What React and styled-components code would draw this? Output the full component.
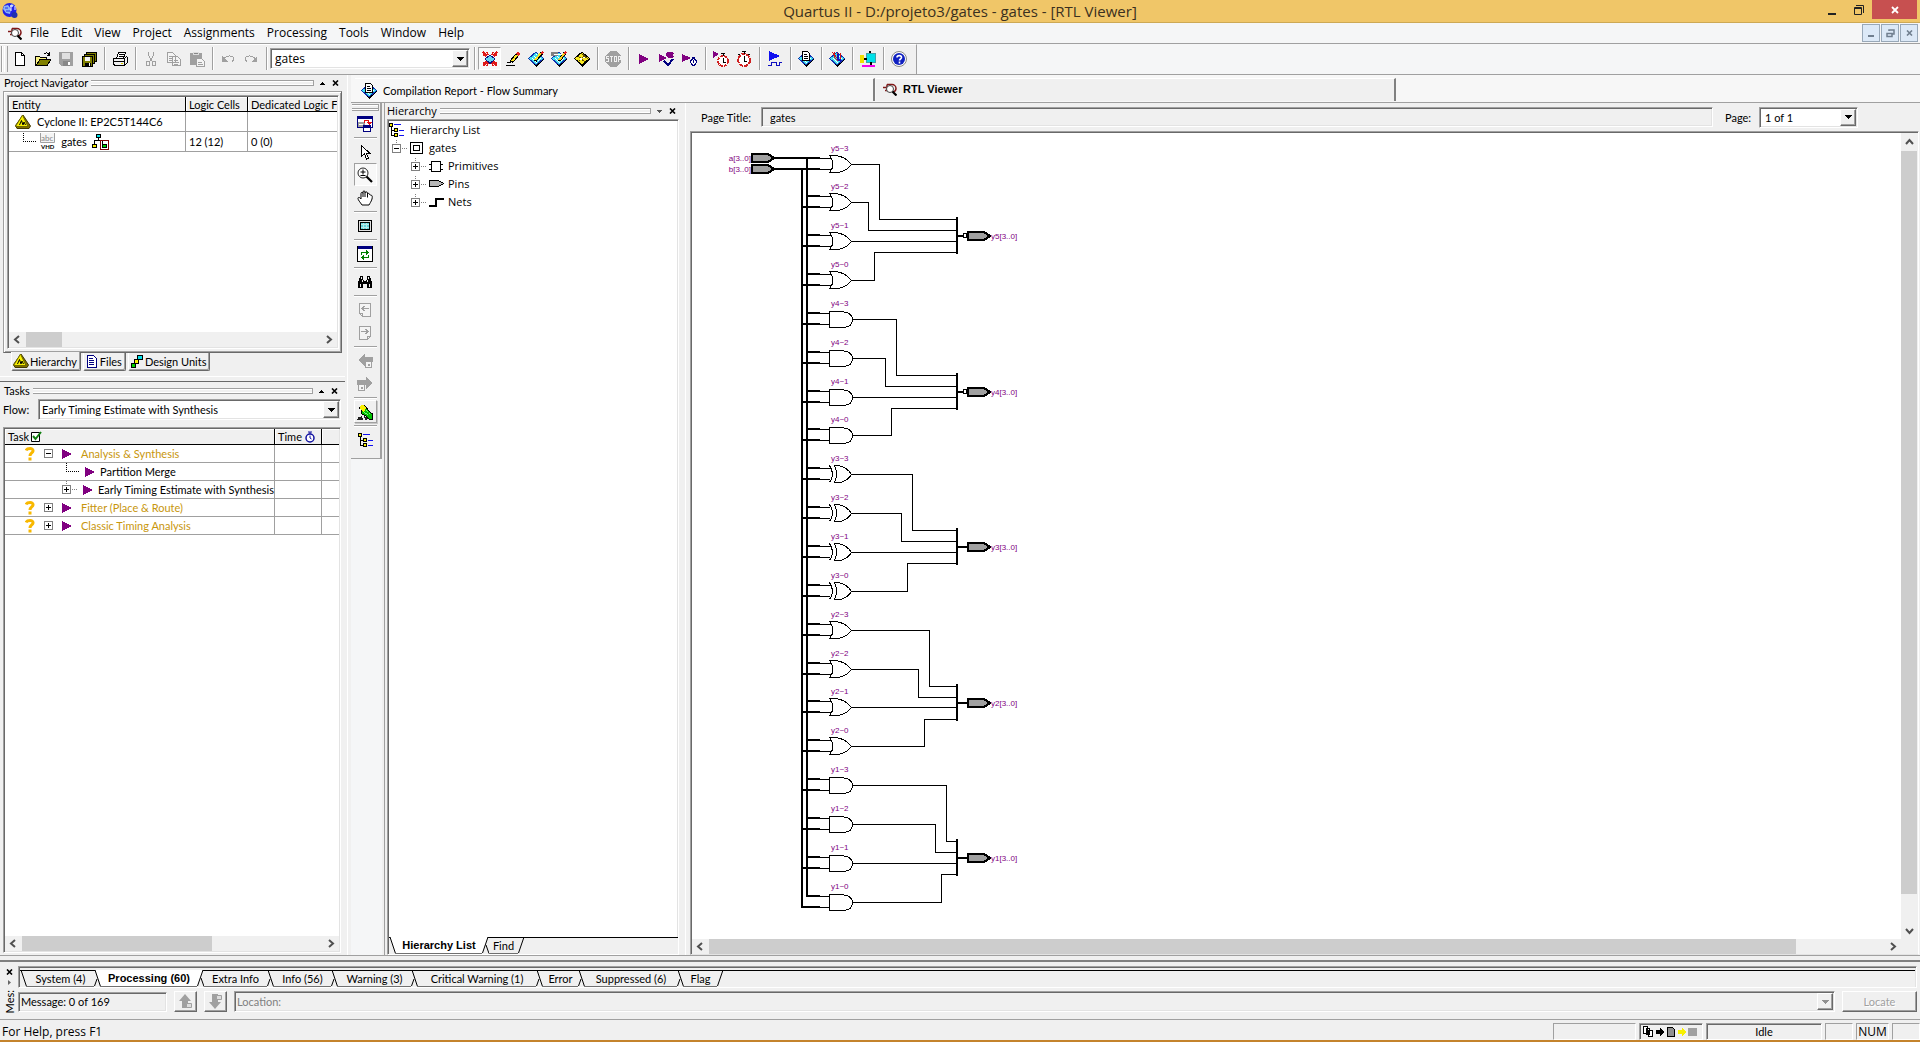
import React from "react";
import styled, { createGlobalStyle, css } from "styled-components";

const ui = '"Open Sans", "Noto Sans", sans-serif';
const classic = 'Lato, "Liberation Sans", Arial, sans-serif';
const classicBold = '"Liberation Sans", Arial, sans-serif';

const GlobalStyle = createGlobalStyle`
  *, *::before, *::after { box-sizing: border-box; }
  body { margin: 0; background: #f0f0f0; color: #000; font: 11px/13px ${classic}; overflow: hidden; }
  button, input, select { font: inherit; color: inherit; margin: 0; padding: 0; border: 0; border-radius: 0; background: none; }
  svg { display: block; flex: none; }
`;

const sunken = css`
  border: 1px solid;
  border-color: #a0a0a0 #fff #fff #a0a0a0;
  box-shadow: inset 1px 1px #696969, inset -1px -1px #e3e3e3;
`;
const raised = css`
  border: 1px solid;
  border-color: #fff #696969 #696969 #fff;
  box-shadow: inset -1px -1px #a0a0a0;
`;

const Shell = styled.div`display: flex; flex-direction: column; height: 100vh;`;

/* ---------- title bar and menu ---------- */
const TitleBar = styled.header`
  display: grid; grid-template-columns: 1fr auto 1fr; height: 23px; flex: none;
  background: #f0c668; border-bottom: 1px solid #cda955;
`;
const AppMark = styled.div`padding: 2px 0 0 2px;`;
const AppTitle = styled.h1`margin: 0; font: 400 15px/23px ${ui}; color: #3a3020;`;
const WindowButtons = styled.div`display: flex; justify-content: flex-end; padding-right: 3px;`;
const WindowButton = styled.button`
  display: flex; align-items: center; justify-content: center;
  width: ${(p) => (p.$close ? 45 : 27)}px; height: 19px;
  background: ${(p) => (p.$close ? "#c75050" : "transparent")};
`;
const MenuBar = styled.nav`
  display: flex; align-items: center; height: 20px; flex: none; padding: 0 2px 0 8px; background: #f5f6f7;
  & > svg { margin-right: 2px; }
`;
const MenuItem = styled.button`padding: 0 6px; font: 12px/18px ${ui};`;
const MdiButtons = styled.div`display: flex; gap: 1px; margin-left: auto;`;
const MdiButton = styled.button`
  display: flex; align-items: center; justify-content: center; width: 18px; height: 18px;
  border: 1px solid #98a8b8; background: #dce9f7;
`;

/* ---------- main toolbar ---------- */
const ToolbarRow = styled.div`
  display: flex; height: 32px; flex: none; background: #f5f6f7;
  border-top: 1px solid #a0a0a0; border-bottom: 1px solid #a0a0a0;
`;
const Toolbar = styled.div`
  display: flex; align-items: center; padding: 0 6px 2px 1px; background: #f0f0f0;
  border-top: 1px solid #fff; border-right: 1px solid #a0a0a0;
`;
const GripV = styled.div`
  width: 7px; height: 26px;
  border: solid #a0a0a0; border-width: 0 1px; box-shadow: inset 1px 0 #fff, inset -2px 0 #f0f0f0, inset -3px 0 #fff;
`;
const ToolButton = styled.button`
  display: flex; align-items: center; justify-content: center; width: 23px; height: 23px;
  ${(p) => p.$on && css`background: #f8f8f8; border: 1px solid; border-color: #a0a0a0 #fff #fff #a0a0a0;`}
  ${(p) => p.$up && css`border: 1px solid; border-color: #fff #a0a0a0 #a0a0a0 #fff; box-shadow: 1px 1px #c8c8c8;`}
`;
const Divider = styled.div`
  width: 8px; height: 23px;
  background: linear-gradient(to right, transparent 4px, #a0a0a0 4px, #a0a0a0 5px, #fff 5px, #fff 6px, transparent 6px);
`;

/* ---------- combo box ---------- */
const ComboBox = styled.div`
  ${sunken} position: relative; width: ${(p) => p.$width || "auto"}; flex: ${(p) => (p.$grow ? 1 : "none")};
  height: 21px; background: ${(p) => (p.$disabled ? "#f0f0f0" : "#fff")};
`;
const ComboSelect = styled.select`
  appearance: none; display: block; width: 100%; height: 100%;
  padding: 0 20px 0 ${(p) => p.$pad || 4}px; outline: 0; font: ${(p) => (p.$large ? `12px/17px ${ui}` : `11px/17px ${classic}`)};
  &:disabled { color: #808080; opacity: 1; }
`;
const ComboArrow = styled.span`
  ${raised} position: absolute; right: 1px; top: 1px; bottom: 1px; width: 16px; background: #f0f0f0;
  display: flex; align-items: center; justify-content: center; pointer-events: none;
`;
function Combo({ label, value, width, grow, disabled, large, pad }) {
  return (
    <ComboBox $width={width} $grow={grow} $disabled={disabled}>
      <ComboSelect aria-label={label} disabled={disabled} $large={large} $pad={pad} defaultValue={value}>
        <option>{value}</option>
      </ComboSelect>
      <ComboArrow>
        <svg width="7" height="4" shapeRendering="crispEdges"><path d="M0 0h7L3.500 4z" fill={disabled ? "#909090" : "#000"} /></svg>
      </ComboArrow>
    </ComboBox>
  );
}

/* ---------- docks ---------- */
const Workspace = styled.main`display: flex; flex: 1; min-height: 0; border-bottom: 1px solid #a0a0a0;`;
const LeftDock = styled.aside`display: flex; flex-direction: column; width: 345px; flex: none;`;
const DockSection = styled.section`
  display: flex; flex-direction: column; padding: ${(p) => (p.$tasks ? "1px 4px 2px 3px" : "0 3px 9px 3px")};
  ${(p) => (p.$tasks ? css`flex: 1; min-height: 0;` : css`height: 307px; border-bottom: 1px solid #696969; box-shadow: inset 0 -4px #f0f0f0, inset 0 -5px #fff;`)}
`;
const CaptionBar = styled.div`display: flex; align-items: center; height: 16px; flex: none; padding: 0 0 0 1px;`;
const Caption = styled.h2`margin: 0; font: 400 11px/14px ${(p) => (p.$ui ? ui : classic)};`;
const Grip = styled.div`
  flex: 1; height: 6px; margin: 0 2px 0 3px; border: solid #a0a0a0; border-width: 1px 1px 1px 0;
  background: linear-gradient(#fff 1px, transparent 1px, transparent 3px, #fff 3px);
`;
const CaptionButton = styled.button`display: flex; align-items: center; justify-content: center; width: 13px; height: 12px;`;
function SmallX({ color = "#000" }) {
  return <svg width="7" height="6"><path d="M1 .500l5 5M6 .500l-5 5" stroke={color} strokeWidth="1.600" /></svg>;
}
function DockCaption({ text, down, uiFont }) {
  return (
    <CaptionBar>
      <Caption $ui={uiFont}>{text}</Caption>
      <Grip />
      <CaptionButton aria-label="Dock">
        <svg width="5" height="3" shapeRendering="crispEdges"><path d={down ? "M0 0h5L2.500 3z" : "M0 3h5L2.500 0z"} fill={down ? "#555" : "#000"} /></svg>
      </CaptionButton>
      <CaptionButton aria-label="Close"><SmallX /></CaptionButton>
    </CaptionBar>
  );
}

const OuterFrame = styled.div`
  display: flex; flex: 1; min-height: 0; padding: 3px 2px 3px 3px;
  border: 1px solid; border-color: #a0a0a0 #696969 #696969 #a0a0a0; box-shadow: inset 1px 1px #fff, inset -1px -1px #a0a0a0;
`;
const Well = styled.div`
  ${sunken} display: flex; flex-direction: column; flex: 1; min-width: 0; min-height: 0; padding: 1px; background: #fff;
`;
const WellBody = styled.div`flex: 1; min-height: 0; overflow: hidden;`;

const Grid = styled.table`
  width: 100%; table-layout: fixed; border-collapse: separate; border-spacing: 0;
  th, td { padding: 0 0 0 3px; text-align: left; font-weight: 400; white-space: nowrap; height: ${(p) => p.$row}px; }
  th { height: ${(p) => p.$head}px; background: #f0f0f0; border-right: 1px solid #000; border-bottom: 1px solid #000; box-shadow: inset 1px 1px #fff; }
  td { border-right: 1px solid #a0a0a0; border-bottom: 1px solid #a0a0a0; }
  th:last-child, td:last-child { border-right: 0; }
`;
const Cell = styled.div`display: flex; align-items: center; gap: ${(p) => p.$gap || 6}px; padding-left: ${(p) => p.$pad || 0}px; color: ${(p) => (p.$amber ? "#c8960c" : "#000")};`;
const Slot = styled.span`display: flex; align-items: center; justify-content: center; width: ${(p) => p.$w}px; flex: none;`;

/* ---------- scroll bars ---------- */
const HScroll = styled.div`display: flex; height: 15px; flex: none; background: #f0f0f0;`;
const VScroll = styled.div`display: flex; flex-direction: column; width: 16px; background: #f0f0f0;`;
const ScrollTrack = styled.div`display: flex; flex: 1; flex-direction: ${(p) => (p.$v ? "column" : "row")};`;
const ScrollThumb = styled.div`flex: 0 0 ${(p) => p.$size}; background: #cdcdcd;`;
const ScrollButton = styled.button`display: flex; align-items: center; justify-content: center; width: 17px; height: ${(p) => (p.$v ? 18 : 15)}px; flex: none;`;
const chevrons = { left: "M6 1L2 4.500 6 8", right: "M3 1l4 3.500L3 8", up: "M1 6l3.500-4L8 6", down: "M1 3l3.500 4L8 3" };
function Chevron({ dir, v }) {
  return <ScrollButton $v={v} aria-label={dir}><svg width="9" height="9"><path d={chevrons[dir]} fill="none" stroke="#505050" strokeWidth="2" /></svg></ScrollButton>;
}
function HBar({ size }) {
  return <HScroll><Chevron dir="left" /><ScrollTrack><ScrollThumb $size={size} /></ScrollTrack><Chevron dir="right" /></HScroll>;
}

/* ---------- navigator tabs ---------- */
const NavTabs = styled.div`display: flex; gap: 2px; height: 19px; flex: none; padding-left: 8px;`;
const NavTab = styled.button`
  display: flex; align-items: center; gap: ${(p) => (p.$on ? 1 : 2)}px; height: ${(p) => (p.$on ? 19 : 18)}px; padding: 0 3px 0 ${(p) => (p.$on ? 1 : 2)}px;
  margin-top: ${(p) => (p.$on ? -1 : 0)}px; background: #f0f0f0;
  border: solid; border-width: 0 1px 1px; border-color: #696969 #696969 #696969 #fff; border-radius: 0 0 2px 2px; box-shadow: inset -1px -1px #a0a0a0;
`;
const FlowRow = styled.div`display: flex; align-items: center; height: 21px; margin-bottom: 7px; flex: none;`;
const FlowLabel = styled.span`width: 35px;`;

/* ---------- document area ---------- */
const Documents = styled.div`display: flex; flex-direction: column; flex: 1; min-width: 0; margin-left: 2px; border-left: 1px solid #fff; padding-left: 3px;`;
const DocTabs = styled.div`display: flex; height: 28px; flex: none; background: #f7f7f7; border-bottom: 1px solid #a0a0a0; padding-top: 3px;`;
const DocTab = styled.button`
  display: flex; align-items: center; width: ${(p) => p.$w}; height: 23px; text-align: left;
  margin-left: ${(p) => (p.$on ? 1 : 4)}px; padding: ${(p) => (p.$on ? "0 0 2px 7px" : "1px 0 0 6px")}; gap: 6px;
  font: ${(p) => (p.$on ? `700 11px/13px ${classicBold}` : `11px/13px ${classic}`)}; background: ${(p) => (p.$on ? "#f0f0f0" : "#f7f7f7")};
  border: solid; border-width: 1px 2px 0 0; border-color: #fff #808080 #fff #fff;
`;
const DocBody = styled.div`display: flex; flex: 1; min-height: 0;`;
const SideColumn = styled.div`width: 31px; flex: none; background: #f5f6f7;`;
const SideTools = styled.div`
  display: flex; flex-direction: column; align-items: center; padding: 1px 1px 7px 0; background: #f0f0f0;
  border: solid #a0a0a0; border-width: 0 2px 1px 0;
`;
const GripH = styled.div`width: 27px; height: 7px; margin-bottom: 1px; border: solid #a0a0a0; border-width: 1px 1px 1px 0; background: linear-gradient(#fff 1px, transparent 1px, transparent 3px, #a0a0a0 3px, #a0a0a0 4px, #fff 4px);`;
const SideDivider = styled.div`width: 23px; height: 5px; flex: none; background: linear-gradient(transparent 2px, #a0a0a0 2px, #a0a0a0 3px, #fff 3px, #fff 4px, transparent 4px);`;

const HierarchyPane = styled.section`display: flex; flex-direction: column; width: 295px; flex: none; padding: 0 0 0 1px; border-left: 1px solid #a0a0a0; margin-left: 2px;`;
const PaneWell = styled(Well)`padding: 1px 0 0 1px; margin-left: 1px;`;
const Tree = styled.ul`list-style: none; margin: 0; padding: 0; font: 11px/18px ${ui};`;
const TreeItem = styled.li`display: flex; align-items: center; height: 18px; gap: 2px; padding-left: ${(p) => p.$indent}px;`;
const TreeText = styled.span`padding-left: ${(p) => (p.$tight ? 2 : 4)}px;`;

/* ---------- slanted tabs ---------- */
const SlantRow = styled.div`display: flex; height: 17px; flex: none; background: linear-gradient(#000 1px, #f0f0f0 1px);`;
const SlantTab = styled.button`
  width: ${(p) => p.$w}px; flex: none; height: 17px; white-space: nowrap;
  font: ${(p) => (p.$on ? `700 11px/15px ${classicBold}` : `11px/15px ${classic}`)}; background: ${(p) => (p.$on ? "#fff" : "transparent")};
  border-bottom: 1px solid #707070;
`;
function Slant({ before, after }) {
  return (
    <svg width="7" height="17">
      {before === "on" && <path d="M0 0h6L0 16z" fill="#fff" />}
      {after === "on" && <path d="M1 0L7 16V0z" fill="#fff" />}
      {before && <path d={after && after !== "none" && before !== "on" ? "M3 9L.500 16" : "M6 0L.500 16"} stroke="#000" fill="none" />}
      {after && after !== "none" && <path d={before === "on" ? "M4 8l3 8.500" : "M1 0l5.500 16.500"} stroke="#000" fill="none" />}
    </svg>
  );
}
function SlantTabs({ tabs }) {
  return (
    <SlantRow>
      <Slant after={tabs[0].on ? "on" : "off"} />
      {tabs.map((t, i) => (
        <React.Fragment key={t.text}>
          <SlantTab $w={t.w} $on={t.on}>{t.text}</SlantTab>
          <Slant before={t.on ? "on" : "off"} after={tabs[i + 1] ? (tabs[i + 1].on ? "on" : "off") : "none"} />
        </React.Fragment>
      ))}
    </SlantRow>
  );
}

/* ---------- viewer ---------- */
const Viewer = styled.section`display: flex; flex-direction: column; flex: 1; min-width: 0; margin-left: 6px; border-left: 1px solid #fff; padding: 0 1px 0 4px;`;
const PageBar = styled.div`display: flex; align-items: center; height: 28px; flex: none; padding: 0 61px 0 11px;`;
const PageLabel = styled.label`width: ${(p) => p.$w}px; flex: none;`;
const PageField = styled.input`${sunken} flex: 1; min-width: 0; height: 20px; padding: 0 8px; margin-right: 12px; outline: 0;`;
const CanvasWell = styled.div`
  display: grid; grid-template-columns: 1fr 16px; grid-template-rows: 1fr 15px; flex: 1; min-height: 0;
  border: 1px solid; border-color: #a0a0a0 #fff #e3e3e3 #a0a0a0; box-shadow: inset 1px 1px #696969; padding: 1px 1px 0; background: #f0f0f0;
`;
const Canvas = styled.div`background: #fff; overflow: hidden; min-height: 0;`;

/* ---------- messages and status ---------- */
const Messages = styled.section`display: flex; height: 64px; flex: none; padding: 5px 3px 0 0; border-bottom: 1px solid #a0a0a0; background: linear-gradient(#f0f0f0 4px, #808080 4px, #808080 6px, #f0f0f0 6px);`;
const MessageSide = styled.div`display: flex; flex-direction: column; align-items: center; gap: 1px; width: 18px; flex: none; padding: 5px 0 0 1px;`;
const SideCaption = styled.span`writing-mode: vertical-rl; transform: rotate(180deg); line-height: 13px; margin-top: 3px;`;
const MessageMain = styled.div`display: flex; flex-direction: column; flex: 1; min-width: 0; padding-top: 5px;`;
const MessageTabs = styled.div`${sunken} height: 22px; padding: 3px 1px 0 1px;`;
const MessageRow = styled.div`display: flex; align-items: center; height: 21px; margin-top: 3px; gap: 7px;`;
const MessageCount = styled.output`${sunken} width: 149px; height: 20px; padding: 2px; line-height: 13px;`;
const StepButton = styled.button`${raised} display: flex; align-items: center; justify-content: center; width: 23px; height: 21px;`;
const LocateButton = styled.button`${raised} width: 75px; height: 21px; color: #a0a0a0; text-shadow: 1px 1px #fff;`;
const StatusBar = styled.footer`display: flex; align-items: center; height: 20px; flex: none; padding: 3px 0 0 2px; gap: 3px;`;
const StatusText = styled.span`flex: 1; font: 12px/17px ${ui};`;
const StatusCell = styled.div`
  display: flex; align-items: center; justify-content: center; gap: 2px; width: ${(p) => p.$w}px; height: 17px; font: ${(p) => (p.$ui ? `12px/15px ${ui}` : `11px/15px ${classic}`)};
  border: 1px solid; border-color: #a0a0a0 #fff #fff #a0a0a0; ${(p) => p.$deep && css`box-shadow: inset 1px 1px #696969;`}
`;
const DesktopEdge = styled.div`height: 2px; flex: none; background: #c4832c;`;

/* ---------- icons ---------- */
function Svg({ w = 16, h = 16, children, smooth }) {
  return <svg width={w} height={h} viewBox={`0 0 ${w} ${h}`} fill="none" shapeRendering={smooth ? "auto" : "crispEdges"}>{children}</svg>;
}
const Gem = () => (
  <>
    <path d="M0 8l8 8 8-8v-1H0z" fill="#000" />
    <path d="M8 1l7.500 6.500L8 14 .500 7.500z" fill="#40e0f0" stroke="#1030b0" />
    <path d="M4 7h1M6 5h1M6 9h1M8 3h1M8 7h1M8 11h1M10 5h1M10 9h1M12 7h1M5 8h1M7 6h1M7 10h1M9 8h1M11 8h1" stroke="#fff" />
  </>
);
const icons = {
  logo: <Svg w={17} h={17} smooth><circle cx="7.500" cy="8" r="7" fill="#2222e8" /><path d="M2 4l4-1 3 4-1 5-4-1-3-4zM9 2l3 1-2 2z" fill="#8fb4f4" /><path d="M8 4h3M9 3v6M13 4v4" stroke="#fff" /><circle cx="12.500" cy="13" r="3" fill="#2030b0" /><path d="M3 6h3M4 9h4" stroke="#2233ee" /></Svg>,
  rtl: <Svg w={14} h={13} smooth><path d="M0 4.500h4M2 7.500h3M4 1.500h5a4 4 0 014 4c0 2-1 3-3 3.500M4 1.500v6" stroke="#801818" strokeWidth="1.500" /><circle cx="7" cy="6" r="3.500" fill="#fff" stroke="#444" /><path d="M9.500 8.500l4 4" stroke="#000" strokeWidth="2.200" /></Svg>,
  fresh: <Svg><path d="M3.500 1.500h6l3 3v10h-9z" fill="#fff" stroke="#000" /><path d="M9.500 1.500v3h3" stroke="#000" /></Svg>,
  open: <Svg><path d="M.500 5.500h4l1 1h6v8H.500z" fill="#f8f080" stroke="#000" /><path d="M1 14.500l4-6h11l-4 6z" fill="#808000" stroke="#000" /><path d="M9 3c2-2 4-1 5 1M14.500 1v3.500h-3" stroke="#000" /></Svg>,
  save: <Svg><path d="M1 1h14v14H3l-2-2z" fill="#a0a0a0" /><path d="M4 2h8v6H4z" fill="#e0e0e0" /><path d="M5 10h7v5H5z" fill="#888" /><path d="M10 11h2v3h-2z" fill="#fff" /></Svg>,
  saveAll: <Svg><path d="M5.500 1.500h10v9h-10z" fill="#808000" stroke="#000" /><path d="M3.500 3.500h10v9h-10z" fill="#808000" stroke="#000" /><path d="M1.500 5.500h10v10h-10z" fill="#808000" stroke="#000" /><path d="M4 6h5v4H4z" fill="#f4f4f4" /><path d="M4 12h6v3H4z" fill="#000" /><path d="M8 12h1v3H8z" fill="#fff" /></Svg>,
  print: <Svg><path d="M4.500 7.500l2-6h7l-2 6" fill="#fff" stroke="#000" /><path d="M7 3.500h5M6.500 5.500h5" stroke="#000" /><path d="M1.500 7.500h11l2-2 1 1v5l-3 3h-10l-1-2z" fill="#f0f0f0" stroke="#000" /><path d="M2 10.500h11M12.500 8v6" stroke="#000" /><path d="M9 12h2v1H9z" fill="#e0d000" /></Svg>,
  cut: <Svg><path d="M5.500 1v3l3 6M10.500 1v3l-3 6" stroke="#a0a0a0" /><path d="M3.500 10.500h3v4h-3zM9.500 10.500h3v4h-3z" stroke="#a0a0a0" /></Svg>,
  copy: <Svg><path d="M1.500 1.500h5l3 3v7h-8zM6.500 5.500h5l3 3v6h-8z" fill="#f4f4f4" stroke="#a0a0a0" /><path d="M3 5h3M3 7h3M3 9h3M8 9h4M8 11h5M8 13h4" stroke="#a0a0a0" /></Svg>,
  paste: <Svg><path d="M1 2h12v12H1z" fill="#a0a0a0" /><path d="M4.500 1.500h5v2h-5z" fill="#888" stroke="#ddd" /><path d="M7.500 7.500h5l3 3v5h-8z" fill="#f4f4f4" stroke="#a0a0a0" /><path d="M9 11.500h4M9 13.500h5" stroke="#a0a0a0" /></Svg>,
  undo: <Svg><path d="M4 8C6 4 13 4 13.500 7.500c0 2-1 3-2 4" stroke="#a0a0a0" /><path d="M2 5v6h6z" fill="#a0a0a0" /></Svg>,
  redo: <Svg><path d="M12 8C10 4 3 4 2.500 7.500c0 2 1 3 2 4" stroke="#a0a0a0" /><path d="M14 5v6H8z" fill="#a0a0a0" /></Svg>,
  burst: <Svg><path d="M1 1l4 4M15 1l-4 4M1 15l4-4M15 15l-4-4M5 1l1 3M11 1l-1 3M5 15l1-3M11 15l-1-3M1 4l3 1M15 4l-3 1M1 12l3-1M15 12l-3-1" stroke="#e01818" strokeWidth="1.500" /><path d="M8 4l5 4-5 4.500L3 8z" fill="#60d8f0" stroke="#101080" /></Svg>,
  pencil: <Svg><path d="M6 11l7-8" stroke="#000" strokeWidth="4" /><path d="M7 10l5-6" stroke="#f8e020" strokeWidth="2" /><path d="M12 4l2-2" stroke="#e02020" strokeWidth="3" /><path d="M2 11.500h4M1 14.500h9" stroke="#000" /></Svg>,
  gemPencil: <Svg><Gem /><path d="M7 10l7-8" stroke="#000" strokeWidth="3" /><path d="M7 9l6-7" stroke="#f8e020" strokeWidth="2" /><path d="M13 3l2-2" stroke="#e02020" strokeWidth="2" /></Svg>,
  gemPin: <Svg><Gem /><path d="M0 1h7v4H0z" fill="#808080" /><path d="M3 3.500h9" stroke="#fff" /><path d="M8 10l6-8" stroke="#000" strokeWidth="3" /><path d="M8 9l6-7" stroke="#f8d020" strokeWidth="2" /><path d="M13 3l2-2" stroke="#e02020" strokeWidth="2" /></Svg>,
  gemGrid: <Svg><Gem /><path d="M8 1l7.500 6.500L8 14 .500 7.500z" fill="#f8e820" stroke="#000" /><path d="M4 5l7 6M11 4l-7 7M7 2l7 6" stroke="#605000" /><path d="M6 7h2v2H6zM9 6h2v1H9z" fill="#fff" /></Svg>,
  stop: <Svg><path d="M5 0h6l5 5v6l-5 5H5l-5-5V5z" fill="#a0a0a0" /><path d="M4 5.500H1.500v2h2v3H1M5 5.500h3M6.500 6v5M9.500 5.500h2v5h-2zM13.500 11V5.500h2v3h-2" stroke="#f0f0f0" /></Svg>,
  play: <Svg><path d="M3 3l10 5-10 5z" fill="#800080" /></Svg>,
  playPlug: <Svg><path d="M0 3l8 4-8 4z" fill="#800080" /><path d="M9 1h4v5H9L7 4zM13 2h2M13 5h2" fill="#800080" stroke="#800080" /><path d="M5 10l4 4 5-6" stroke="#000080" strokeWidth="2" /></Svg>,
  playClock: <Svg><path d="M0 3l9 4-9 4z" fill="#800080" /><path d="M9.500 8.500l2-1 2 1 1 2-1 3-2 1-2-1-1-3zM11.500 9v3M10 6.500h3" fill="#fff" stroke="#000080" /></Svg>,
  watchPlay: <Svg><circle cx="10" cy="10" r="5" fill="#fff" stroke="#d02020" strokeWidth="2" strokeDasharray="3 1" /><path d="M10.500 7v4h2M8 2.500h4M10.500 2v3" stroke="#000" /><path d="M0 0l6 3-6 4z" fill="#800080" /></Svg>,
  watch: <Svg><circle cx="8" cy="9" r="6" fill="#fff" stroke="#d02020" strokeWidth="2" strokeDasharray="4 1" /><path d="M8.500 5v5h2M6 .500h4M8.500 1v2M2 3l2 1M14 3l-2 1" stroke="#000" /></Svg>,
  wave: <Svg><path d="M2 0l11 5-11 5z" fill="#1010f0" /><path d="M1 14.500h3v-3h5v3h3v-3h3" stroke="#1010c0" /></Svg>,
  gemDoc: <Svg><Gem /><path d="M4.500.500h5l2 2v7h-7z" fill="#fff" stroke="#000" /><path d="M6 3.500h3M6 5.500h4M6 7.500h4" stroke="#000" /></Svg>,
  gemTools: <Svg><Gem /><path d="M3 1l5 6M5 1v5l4 4M8 2v6M11 2v7" stroke="#d01818" /><path d="M9 3v5l3 2" stroke="#1010c0" strokeWidth="2" /></Svg>,
  chip: <Svg><path d="M2 14h13v2H2z" fill="#f000f0" /><path d="M6 2h9v9H6z" fill="#00e0e8" stroke="#40a0a8" /><path d="M0 4h4v8H0z" fill="#f0e000" /><path d="M4 7.500h3M9.500 0v2M10.500 11v3" stroke="#000" strokeWidth="2" /></Svg>,
  help: <Svg smooth><circle cx="8" cy="8" r="7.500" fill="#fff" stroke="#888" /><circle cx="8" cy="8" r="6" fill="#1020c0" /><path d="M6 6.500C6 4 10.500 4 10.500 6.500 10.500 8 8.500 8 8.500 9.500M8.500 10.500v2" stroke="#fff" strokeWidth="1.600" /></Svg>,
  layers: <Svg><path d="M.500.500h15v11H.500z" fill="#fff" stroke="#000080" /><path d="M1 1h14v2H1z" fill="#000080" /><path d="M1 6h7v5H1z" fill="#a0a0a0" /><path d="M2 8h4v1H2z" fill="#fff" /><path d="M7 6.500l1-2h3l1 3" stroke="#e01010" /><path d="M9 6h6l-3 3z" fill="#e01010" /><path d="M6.500 9.500h7v6h-7z" fill="#fff" stroke="#000080" /><path d="M7 10h6v2H7z" fill="#000080" /></Svg>,
  arrow: <Svg><path d="M4.500 1.500v11l3-2.500 2 5 2-1-2-4.500h3.500z" fill="#fff" stroke="#000" /></Svg>,
  zoom: <Svg smooth><circle cx="6" cy="6" r="5" fill="#fff" stroke="#222" /><path d="M3.500 5h5M6 2.500v5M3.500 8.500h5" stroke="#000" /><path d="M9.500 9.500l5.500 5.500" stroke="#000" strokeWidth="2.200" /></Svg>,
  hand: <Svg smooth><path d="M5 15C3 12 1 10 1 8.500s1.500-1.500 3 .500V3.500c0-1.500 2-1.500 2 0V2c0-1.500 2-1.500 2 0v1c0-1.500 2.500-1.500 2.500 0v1.500c0-1.500 2-1.500 2 0l1 .500c2 0 2 2 1.500 4-1 3-2 4-3 6z" fill="#fff" stroke="#000" /><path d="M6 3.500V7M8 3v4M10.500 4v3.500" stroke="#000" /></Svg>,
  screen: <Svg><path d="M1.500 2.500h13v11h-13z" fill="#e0e0e0" stroke="#000" /><path d="M3.500 4.500h9v7h-9z" fill="#60d0d8" stroke="#000" /><path d="M4 6.500h8M4 9.500h8M6.500 5v6M9.500 5v6" stroke="#b8e8e8" /></Svg>,
  refresh: <Svg><path d="M.500.500h15v15H.500z" fill="#fff" stroke="#000" /><path d="M1 0h14v3H1z" fill="#000080" /><path d="M4.500 9V6.500h7M9 4.500l2.500 2L9 8.500M11.500 9v2.500h-7M7 9.500l-2.500 2 2.500 2" stroke="#008000" /></Svg>,
  find: <Svg><path d="M3 2h3v3l1 2h2l1-2V2h3l2 7v5h-5v-4H6v4H1V9z" fill="#000" /><path d="M4.500 3v2M11.500 3v2M3.500 10v3M12.500 10v3M5.500 6v2M10.500 6v2" stroke="#f0f0f0" /></Svg>,
  pageBack: <Svg><path d="M2.500 1.500h11v13h-8l-3-3z" fill="#f4f4f4" stroke="#a0a0a0" /><path d="M5 6.500h7M7.500 4L5 6.500 7.500 9M2.500 11.500h3v3" stroke="#a0a0a0" /></Svg>,
  pageNext: <Svg><path d="M2.500 1.500h11v10l-3 3h-8z" fill="#f4f4f4" stroke="#a0a0a0" /><path d="M4 6.500h7M8.500 4L11 6.500 8.500 9M13.500 11.500h-3v3" stroke="#a0a0a0" /></Svg>,
  back: <Svg><path d="M1 7l7-7v4h8v5H8v4z" fill="#a0a0a0" /><path d="M8.500 8.500h6v6h-6z" fill="#f4f4f4" stroke="#a0a0a0" /><path d="M11 11h2v2h-2z" fill="#a0a0a0" /></Svg>,
  forward: <Svg><path d="M15 7L9 0v4H0v5h9v4z" fill="#a0a0a0" /><path d="M1.500 8.500h6v6h-6z" fill="#f4f4f4" stroke="#a0a0a0" /><path d="M4 11h2v2H4z" fill="#a0a0a0" /></Svg>,
  bird: <Svg><path d="M5 1l3 1 3 4 3 3 2 1-1 2 1 3h-4l-3-3-4-2-1-5z" fill="#00c000" stroke="#000" /><path d="M2 3l2-2h3l2 3-2 4-3-2z" fill="#f8f000" /><path d="M1 4l2-1v3z" fill="#000" /><path d="M0 16l2-4 1 2 2-3 1 5zM7 12l1 4h2l1-2z" fill="#202020" /><path d="M7 8l5 4M9 6l4 4" stroke="#80f080" strokeDasharray="1 1" /></Svg>,
  tree: <Svg w={15}><path d="M2.500 4v10M3 8.500h2M3 13.500h2" stroke="#000" /><path d="M.500 1.500h3v3h-3zM5.500 6.500h3v3h-3zM5.500 11.500h3v3h-3z" fill="#f8f000" stroke="#000" /><path d="M5 2.500h7M10 8.500h5M10 13.500h5" stroke="#1010f0" /></Svg>,
  device: <Svg smooth><path d="M8 1L.500 11.500 2 14.500h12l1.500-2.500z" fill="#807000" stroke="#403800" /><path d="M7.500 1L.500 12.500H13z" fill="#f8f000" stroke="#706800" /><path d="M4.500 11l2-4.500L8 11l1-3 1.500 3" stroke="#000" /></Svg>,
  unit: <Svg w={17} h={16}><path d="M2.500 10V6.500h8V10M6.500 4v2" stroke="#000" /><path d="M4.500.500h4v3h-4z" fill="#00e0e8" stroke="#000" /><path d="M.500 10.500h4v3h-4z" fill="#f8f000" stroke="#000" /><path d="M8.500 6.500h8v9h-8z" stroke="#800000" /><path d="M10.500 10.500h4v3h-4z" fill="#00d000" stroke="#000" /></Svg>,
  file: <Svg w={12} h={13}><path d="M1.500.500h6l3 3v9h-9z" fill="#fff" stroke="#000080" /><path d="M3 3.500h4M3 5.500h5M3 7.500h5M3 9.500h5" stroke="#000080" /></Svg>,
  blocks: <Svg w={12} h={13}><path d="M6.500.500h5v4h-5z" fill="#00e0e8" stroke="#000" /><path d="M3.500 4.500h4v4h-4z" fill="#f8f000" stroke="#000" /><path d="M.500 8.500h4v4h-4z" fill="#00d000" stroke="#000" /></Svg>,
  check: <Svg w={11} h={11} smooth><path d="M.500 1.500h8v9h-8z" fill="#fff" stroke="#000" /><path d="M2 5l2.500 3L10 1" stroke="#108010" strokeWidth="2" /></Svg>,
  clock: <Svg w={10} h={12} smooth><circle cx="5" cy="7" r="4" fill="#fff" stroke="#1010a0" strokeWidth="1.500" /><path d="M5 4.500V7l1.500 1M3 1h4M5 1v2" stroke="#1010a0" /></Svg>,
  question: <Svg w={10} h={14} smooth><path d="M1 3.500C2 1 8.500.500 8 4c-.300 2-3 2-3 5M5 10.500v3" stroke="#f8b800" strokeWidth="3" /></Svg>,
  task: <Svg w={10} h={10}><path d="M0 0l10 5-10 5z" fill="#800080" /></Svg>,
  module: <Svg w={13} h={12}><path d="M.500.500h12v11H.500z" fill="#fff" stroke="#000" /><path d="M3.500 3.500h6v5h-6z" stroke="#000" /></Svg>,
  primitive: <Svg w={15} h={13}><path d="M2.500 1.500h9v10h-9z" fill="#fff" stroke="#000" /><path d="M0 4.500h2M0 9.500h2M12 4.500h2M12 9.500h2" stroke="#000" /></Svg>,
  pin: <Svg w={15} h={8}><path d="M.500.500h9l5 3-5 3h-9z" fill="#b8b8b8" stroke="#000" /></Svg>,
  net: <Svg w={15} h={9}><path d="M0 8h7V1h8" stroke="#000" strokeWidth="2" /></Svg>,
};

function VhdIcon() {
  return (
    <svg width="16" height="17">
      <path d="M.500 0v9.500h14V0" fill="#f4f4f4" stroke="#a0a0a0" />
      <text x="1" y="8" fontSize="8" fill="#888">abc</text>
      <text x="1" y="16" fontSize="6" fontWeight="700" fill="#000">VHD</text>
    </svg>
  );
}
function Expander({ open, branch = true }) {
  return (
    <svg width={branch ? 16 : 9} height="17" shapeRendering="crispEdges" fill="none">
      {branch && <path d="M4.500 0v4M10 8.500h6" stroke="#808080" strokeDasharray="1 1" />}
      <path d="M.500 4.500h8v8h-8z" fill="#fff" stroke="#808080" />
      <path d={open ? "M2 8.500h5" : "M2 8.500h5M4.500 6v5"} stroke="#000" />
    </svg>
  );
}
function Elbow() {
  return <svg width="14" height="17" shapeRendering="crispEdges"><path d="M.500 0v8.500h13" fill="none" stroke="#000" strokeDasharray="1 1" /></svg>;
}

/* ---------- schematic ---------- */
const Schematic = styled.svg`
  text { font: 8px "Liberation Sans", Arial, sans-serif; fill: #800080; }
`;
const gateShapes = {
  or: "M-9 -9H-3Q7 -8 13 0Q7 8 -3 8H-9Q-2 0 -9 -9",
  and: "M-9 -8H3Q14 -7 14 0Q14 8 3 8H-9Z",
  xor: "M-4 -9H-1Q8 -8 13 0Q8 8 -1 8H-4Q0 0 -4 -9M-9 -9Q-3 0 -9 8",
};
const groups = [
  { name: "y5", gate: "or", inverted: true },
  { name: "y4", gate: "and", inverted: true },
  { name: "y3", gate: "xor" },
  { name: "y2", gate: "or" },
  { name: "y1", gate: "and" },
];
const bends = [187, 176, null, 182];
const gateY = (n) => Math.floor(31 + n * 38.85);

function Port({ x, y }) {
  return <path d={`M${x} ${y - 4}h16l6 4-6 4h-16z`} fill="#a0a0a0" stroke="#000" strokeWidth="2" />;
}
function Group({ g, index }) {
  const top = Math.round(86 + index * 155.5);
  return (
    <g>
      {[0, 1, 2, 3].map((k) => {
        const y = gateY(index * 4 + k);
        const bend = bends[k] && bends[k] + Math.round(index * 16.7);
        const reach = g.gate === "and" ? 137 : 140;
        return (
          <g key={k}>
            <text x="139" y={y - 13}>{`${g.name}~${3 - k}`}</text>
            <path d={`M115 ${y - 6}h13M110 ${y + 5}h18`} stroke="#000" strokeWidth="2" />
            <path d={`M128 ${y - 5.5}H${reach}M128 ${y + 5.5}H${reach}`} stroke="#000" />
            <path d={gateShapes[g.gate]} transform={`translate(146.500 ${y + 0.5})`} stroke="#000" fill="#fff" />
            <path d={bend ? `M160 ${y + 0.5}H${bend + 0.5}V${top + k * 11 + 0.5}H265` : `M160 ${y + 0.5}H265`} stroke="#000" />
          </g>
        );
      })}
      <path d={`M265 ${top - 2}v37M265 ${top + 17}h10`} stroke="#000" strokeWidth="2" />
      {g.inverted && <path d={`M271.500 ${top + 14.5}h3v4h-3z`} fill="#fff" stroke="#000" />}
      <Port x={276} y={top + 17} />
      <text x="299" y={top + 20}>{`${g.name}[3..0]`}</text>
    </g>
  );
}
function Diagram() {
  return (
    <Schematic width="400" height="790" fill="none" shapeRendering="crispEdges" role="img" aria-label="RTL schematic">
      <text x="59" y="28" textAnchor="end">a[3..0]</text>
      <text x="59" y="39" textAnchor="end">b[3..0]</text>
      <path d="M82 25h46M82 36h46" stroke="#000" strokeWidth="2" />
      <path d="M115 25v739M110 36v739" stroke="#000" strokeWidth="2" />
      <Port x={60} y={25} />
      <Port x={60} y={36} />
      {groups.map((g, i) => <Group key={g.name} g={g} index={i} />)}
    </Schematic>
  );
}

/* ---------- page ---------- */
const menu = ["File", "Edit", "View", "Project", "Assignments", "Processing", "Tools", "Window", "Help"];
const toolsA = ["fresh", "open", "save", "saveAll", "|", "print", "|", "cut", "copy", "paste", "|", "undo", "redo", "|"];
const toolsB = ["|", "burst", "pencil", "gemPencil", "gemPin", "gemGrid", "|", "stop", "|", "play", "playPlug", "playClock", "|", "watchPlay", "watch", "|", "wave", "|", "gemDoc", "|", "gemTools", "|", "chip", "|", "help"];
const sideTools = ["layers", "|", "arrow", "zoom", "hand", "|", "screen", "|", "refresh", "|", "find", "|", "pageBack", "pageNext", "|", "back", "forward", "|", "bird", "|", "tree"];
const messageTabs = [
  { text: "System (4)", w: 67 }, { text: "Processing (60)", w: 96, on: true }, { text: "Extra Info", w: 63 },
  { text: "Info (56)", w: 57 }, { text: "Warning (3)", w: 73 }, { text: "Critical Warning (1)", w: 118 },
  { text: "Error", w: 35 }, { text: "Suppressed (6)", w: 92 }, { text: "Flag", w: 33 },
];
const paneTabs = [{ text: "Hierarchy List", w: 86, on: true }, { text: "Find", w: 29 }];
const tasks = [
  { text: "Analysis & Synthesis", open: true, top: true },
  { text: "Partition Merge" },
  { text: "Early Timing Estimate with Synthesis", box: true },
  { text: "Fitter (Place & Route)", top: true },
  { text: "Classic Timing Analysis", top: true },
];

function Tools({ names }) {
  return names.map((n, i) => (n === "|" ? <Divider key={i} /> : <ToolButton key={i} aria-label={n} $on={n === "burst"}>{icons[n]}</ToolButton>));
}

function ProjectNavigator() {
  return (
    <DockSection>
      <DockCaption text="Project Navigator" />
      <OuterFrame>
        <Well>
          <WellBody>
            <Grid $row={20} $head={15}>
              <colgroup><col width="177" /><col width="62" /><col /></colgroup>
              <thead><tr><th>Entity</th><th>Logic Cells</th><th>Dedicated Logic F</th></tr></thead>
              <tbody>
                <tr><td><Cell $pad={3}>{icons.device} Cyclone II: EP2C5T144C6</Cell></td><td /><td /></tr>
                <tr><td><Cell $pad={11} $gap={3}><Elbow /><VhdIcon /><Slot $w={30}>gates</Slot>{icons.unit}</Cell></td><td>12 (12)</td><td>0 (0)</td></tr>
              </tbody>
            </Grid>
          </WellBody>
          <HBar size="36px" />
        </Well>
      </OuterFrame>
      <NavTabs>
        <NavTab $on>{icons.device}Hierarchy</NavTab>
        <NavTab>{icons.file}Files</NavTab>
        <NavTab>{icons.blocks}Design Units</NavTab>
      </NavTabs>
    </DockSection>
  );
}

function Tasks() {
  return (
    <DockSection $tasks>
      <DockCaption text="Tasks" />
      <FlowRow><FlowLabel>Flow:</FlowLabel><Combo grow label="Flow" value="Early Timing Estimate with Synthesis" pad={3} /></FlowRow>
      <Well>
        <WellBody>
          <Grid $row={18} $head={16}>
            <colgroup><col width="270" /><col width="47" /><col /></colgroup>
            <thead><tr><th><Cell $gap={2}>Task {icons.check}</Cell></th><th><Cell $gap={3}>Time {icons.clock}</Cell></th><th /></tr></thead>
            <tbody>
              {tasks.map((t) => (
                <tr key={t.text}>
                  <td>
                    {t.top ? (
                      <Cell $pad={17} $gap={9} $amber>{icons.question}<Expander branch={false} open={t.open} />{icons.task}<span>{t.text}</span></Cell>
                    ) : (
                      <Cell $pad={t.box ? 54 : 58} $gap={5}>{t.box ? <Expander /> : <Elbow />}{icons.task}<span>{t.text}</span></Cell>
                    )}
                  </td>
                  <td /><td />
                </tr>
              ))}
            </tbody>
          </Grid>
        </WellBody>
        <HBar size="190px" />
      </Well>
    </DockSection>
  );
}

function Hierarchy() {
  return (
    <HierarchyPane>
      <DockCaption text="Hierarchy" down uiFont />
      <PaneWell>
        <WellBody>
          <Tree>
            <TreeItem $indent={0}>{icons.tree}<TreeText>Hierarchy List</TreeText></TreeItem>
            <TreeItem $indent={3}><Expander open />{icons.module}<TreeText>gates</TreeText></TreeItem>
            <TreeItem $indent={22}><Expander />{icons.primitive}<TreeText $tight>Primitives</TreeText></TreeItem>
            <TreeItem $indent={22}><Expander />{icons.pin}<TreeText $tight>Pins</TreeText></TreeItem>
            <TreeItem $indent={22}><Expander />{icons.net}<TreeText $tight>Nets</TreeText></TreeItem>
          </Tree>
        </WellBody>
        <SlantTabs tabs={paneTabs} />
      </PaneWell>
    </HierarchyPane>
  );
}

export default function App() {
  return (
    <Shell>
      <GlobalStyle />
      <TitleBar>
        <AppMark>{icons.logo}</AppMark>
        <AppTitle>Quartus II - D:/projeto3/gates - gates - [RTL Viewer]</AppTitle>
        <WindowButtons>
          <WindowButton aria-label="Minimize"><svg width="8" height="10"><path d="M0 9h8" stroke="#222" strokeWidth="2" /></svg></WindowButton>
          <WindowButton aria-label="Restore"><svg width="10" height="10" fill="none" stroke="#222"><path d="M.500 2.500h7v7h-7zM0 3.500h8M2 .500h7.500V8" /></svg></WindowButton>
          <WindowButton aria-label="Close" $close><svg width="8" height="8"><path d="M1 1l6 6M7 1L1 7" stroke="#fff" strokeWidth="1.800" /></svg></WindowButton>
        </WindowButtons>
      </TitleBar>
      <MenuBar>
        {icons.rtl}
        {menu.map((m) => <MenuItem key={m}>{m}</MenuItem>)}
        <MdiButtons>
          <MdiButton aria-label="Minimize document"><svg width="8" height="7"><path d="M1 6h6" stroke="#707f8f" strokeWidth="2" /></svg></MdiButton>
          <MdiButton aria-label="Restore document"><svg width="9" height="9" fill="none" stroke="#707f8f"><path d="M1 4.500h5v3H1zM3 2V1h5v4H6.500" strokeWidth="1.500" /></svg></MdiButton>
          <MdiButton aria-label="Close document"><SmallX color="#707f8f" /></MdiButton>
        </MdiButtons>
      </MenuBar>
      <ToolbarRow>
        <Toolbar>
          <GripV />
          <Tools names={toolsA} />
          <Combo label="Revision" value="gates" width="200px" large pad={4} />
          <Tools names={toolsB} />
        </Toolbar>
      </ToolbarRow>
      <Workspace>
        <LeftDock><ProjectNavigator /><Tasks /></LeftDock>
        <Documents>
          <DocTabs>
            <DocTab $w="520px">{icons.gemDoc}Compilation Report - Flow Summary</DocTab>
            <DocTab $w="520px" $on>{icons.rtl}RTL Viewer</DocTab>
          </DocTabs>
          <DocBody>
            <SideColumn>
              <SideTools>
                <GripH />
                {sideTools.map((n, i) => (n === "|" ? <SideDivider key={i} /> : <ToolButton key={i} aria-label={n} $on={n === "zoom"} $up={n === "bird"}>{icons[n]}</ToolButton>))}
              </SideTools>
            </SideColumn>
            <Hierarchy />
            <Viewer>
              <PageBar>
                <PageLabel htmlFor="page-title" $w={60}>Page Title:</PageLabel>
                <PageField id="page-title" readOnly value="gates" />
                <PageLabel as="span" $w={34}>Page:</PageLabel>
                <Combo label="Page" value="1 of 1" width="99px" pad={5} />
              </PageBar>
              <CanvasWell>
                <Canvas><Diagram /></Canvas>
                <VScroll><Chevron dir="up" v /><ScrollTrack $v><ScrollThumb $size="96.5%" /></ScrollTrack><Chevron dir="down" v /></VScroll>
                <HBar size="92.5%" />
              </CanvasWell>
            </Viewer>
          </DocBody>
        </Documents>
      </Workspace>
      <Messages>
        <MessageSide>
          <CaptionButton aria-label="Close messages"><SmallX /></CaptionButton>
          <svg width="3" height="7"><path d="M0 1l3 2.500L0 6z" fill="#666" /></svg>
          <SideCaption>Mes:</SideCaption>
        </MessageSide>
        <MessageMain>
          <MessageTabs><SlantTabs tabs={messageTabs} /></MessageTabs>
          <MessageRow>
            <MessageCount>Message: 0 of 169</MessageCount>
            <StepButton aria-label="Previous message"><svg width="14" height="15"><path d="M0 7l6-7 6 7H9v7H3V7z" fill="#a0a0a0" /><path d="M7.500 9.500h5v4h-5z" fill="#ddd" stroke="#a0a0a0" /></svg></StepButton>
            <StepButton aria-label="Next message"><svg width="14" height="15"><path d="M0 8l6 7 6-7H9V0H3v8z" fill="#a0a0a0" /><path d="M7.500 1.500h5v4h-5z" fill="#ddd" stroke="#a0a0a0" /></svg></StepButton>
            <Combo grow disabled label="Location" value="Location:" pad={2} />
            <LocateButton disabled>Locate</LocateButton>
          </MessageRow>
        </MessageMain>
      </Messages>
      <StatusBar>
        <StatusText>For Help, press F1</StatusText>
        <StatusCell $w={83} />
        <StatusCell $w={64} $deep>
          <Svg w={56} h={12}>
            <path d="M.500.500h4v7h-4zM3.500 2.500h3v6h-3zM5.500 4.500h4v6h-4z" fill="#fff" stroke="#000" />
            <path d="M13 4h4V2l5 4-5 4V8h-4z" fill="#000" />
            <path d="M24.500 1.500h5l2 2v7h-7z" fill="#909090" stroke="#000" />
            <path d="M35 4h4V2l5 4-5 4V8h-4z" fill="#f8f000" />
            <path d="M45 2h9v8h-9z" fill="#a0a0a0" />
          </Svg>
        </StatusCell>
        <StatusCell $w={116} $deep>Idle</StatusCell>
        <StatusCell $w={28} />
        <StatusCell $w={33} $ui>NUM</StatusCell>
        <StatusCell $w={28} />
      </StatusBar>
      <DesktopEdge />
    </Shell>
  );
}
